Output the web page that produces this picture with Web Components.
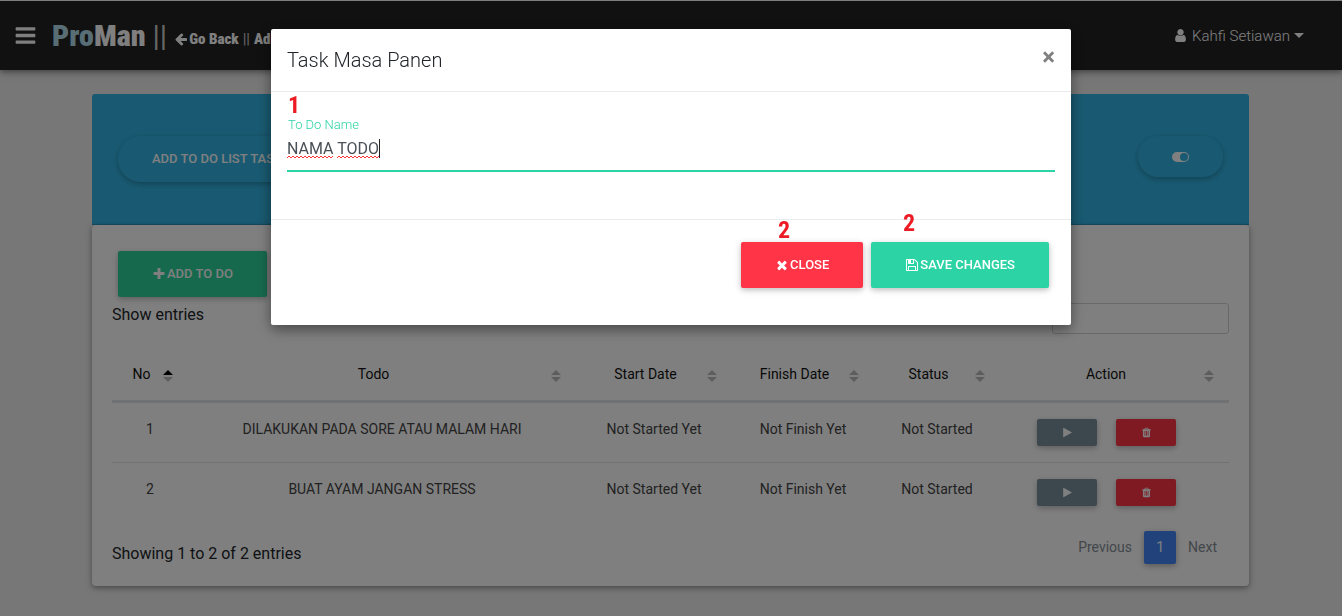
<!DOCTYPE html>
<html lang="id">
<head>
<meta charset="utf-8">
<meta name="viewport" content="width=device-width, initial-scale=1">
<title>ProMan</title>
<style>
  body { margin: 0; min-height: 100vh; background: #eee; color: #212529; font: 400 16px/24px Roboto, sans-serif; }
</style>
</head>
<body>
<pm-navbar user="Kahfi Setiawan"></pm-navbar>
<pm-board>
  <pm-todo-table></pm-todo-table>
</pm-board>
<pm-modal heading="Task Masa Panen">
  <pm-field label="To Do Name" value="NAMA TODO"></pm-field>
  <pm-button slot="actions" color="#ff3547" icon="times">CLOSE</pm-button>
  <pm-button slot="actions" color="#2bd3a5" icon="save">SAVE CHANGES</pm-button>
</pm-modal>

<script>
const ICONS = {
  times: 'M1490 1322q0 40-28 68l-136 136q-28 28-68 28t-68-28l-294-294-294 294q-28 28-68 28t-68-28l-136-136q-28-28-28-68t28-68l294-294-294-294q-28-28-28-68t28-68l136-136q28-28 68-28t68 28l294 294 294-294q28-28 68-28t68 28l136 136q28 28 28 68t-28 68l-294 294 294 294q28 28 28 68z',
  plus: 'M1600 736v192q0 40-28 68t-68 28h-416v416q0 40-28 68t-68 28h-192q-40 0-68-28t-28-68v-416h-416q-40 0-68-28t-28-68v-192q0-40 28-68t68-28h416v-416q0-40 28-68t68-28h192q40 0 68 28t28 68v416h416q40 0 68 28t28 68z',
  save: 'M512 1536h768v-384h-768v384zm896 0h128v-896q0-14-10-38.500t-20-34.500l-281-281q-10-10-34-20t-39-10v416q0 40-28 68t-68 28h-576q-40 0-68-28t-28-68v-416h-128v1280h128v-416q0-40 28-68t68-28h832q40 0 68 28t28 68v416zm-384-928v-320q0-13-9.500-22.500t-22.500-9.500h-192q-13 0-22.500 9.500t-9.500 22.500v320q0 13 9.500 22.500t22.500 9.500h192q13 0 22.500-9.500t9.500-22.500zm640 32v928q0 40-28 68t-68 28h-1344q-40 0-68-28t-28-68v-1344q0-40 28-68t68-28h928q40 0 88 20t76 48l280 280q28 28 48 76t20 88z',
  trash: 'M704 1376v-704q0-14-9-23t-23-9h-64q-14 0-23 9t-9 23v704q0 14 9 23t23 9h64q14 0 23-9t9-23zm256 0v-704q0-14-9-23t-23-9h-64q-14 0-23 9t-9 23v704q0 14 9 23t23 9h64q14 0 23-9t9-23zm256 0v-704q0-14-9-23t-23-9h-64q-14 0-23 9t-9 23v704q0 14 9 23t23 9h64q14 0 23-9t9-23zm-544-992h448l-48-117q-7-9-17-11h-317q-10 2-17 11zm928 32v64q0 14-9 23t-23 9h-96v948q0 83-47 143.500t-113 60.500h-832q-66 0-113-58.500t-47-141.500v-952h-96q-14 0-23-9t-9-23v-64q0-14 9-23t23-9h309l70-167q15-37 54-63t79-26h320q40 0 79 26t54 63l70 167h309q14 0 23 9t9 23z',
  play: 'M1576 927l-1328 738q-23 13-39.500 3t-16.500-36v-1472q0-26 16.500-36t39.500 3l1328 738q23 13 23 31t-23 31z',
  back: 'M1664 896v128q0 53-32.500 90.500t-84.500 37.500h-704l293 294q38 36 38 90t-38 90l-75 76q-37 37-90 37-52 0-91-37l-651-652q-37-37-37-90 0-52 37-91l651-650q38-38 91-38 52 0 90 38l75 74q38 38 38 91t-38 91l-293 293h704q52 0 84.500 37.500t32.500 90.500z',
  user: 'M1536 1399q0 109-62.500 187t-150.500 78h-854q-88 0-150.500-78t-62.500-187q0-85 8.500-160.500t31.500-152 58.500-131 94-89 134.500-34.500q131 128 313 128t313-128q76 0 134.500 34.500t94 89 58.500 131 31.500 152 8.500 160.500zm-256-887q0 159-112.500 271.500t-271.500 112.500-271.500-112.500-112.500-271.500 112.500-271.500 271.500-112.500 271.500 112.500 112.500 271.500z',
  bars: 'M1664 1344v128q0 26-19 45t-45 19h-1408q-26 0-45-19t-19-45v-128q0-26 19-45t45-19h1408q26 0 45 19t19 45zm0-512v128q0 26-19 45t-45 19h-1408q-26 0-45-19t-19-45v-128q0-26 19-45t45-19h1408q26 0 45 19t19 45zm0-512v128q0 26-19 45t-45 19h-1408q-26 0-45-19t-19-45v-128q0-26 19-45t45-19h1408q26 0 45 19t19 45z'
};
const icon = (name, size) =>
  `<svg width="${size}" height="${size}" viewBox="0 0 1792 1792" fill="currentColor" aria-hidden="true"><path d="${ICONS[name]}"/></svg>`;

class Base extends HTMLElement {
  connectedCallback() {
    if (this.shadowRoot) return;
    this.attachShadow({ mode: 'open' }).innerHTML =
      `<style>*,:host{box-sizing:border-box}svg{display:block;flex:none}button,input{font:inherit;margin:0}button{cursor:pointer}${this.css()}</style>${this.html()}`;
  }
}

customElements.define('pm-button', class extends Base {
  css() {
    const small = this.hasAttribute('small');
    return `
    :host { display: block; }
    button { display: flex; align-items: center; justify-content: center; gap: 1px; height: ${small ? 27 : 46}px;
      ${small ? 'width: 60px; padding: 0;' : 'padding: 0 34px;'} border: 0; border-radius: 2px; color: #fff;
      background: ${this.getAttribute('color')}; font-size: 13px; line-height: 20px; font-weight: 500; white-space: nowrap;
      box-shadow: 0 2px 5px rgba(0,0,0,.16), 0 2px 8px rgba(0,0,0,.12); }
    button.pill { border-radius: 160px; }`;
  }
  html() {
    const name = this.getAttribute('icon');
    const label = this.getAttribute('label');
    return `<button type="button" class="${this.hasAttribute('pill') ? 'pill' : ''}" ${label ? `aria-label="${label}"` : ''}>${name ? icon(name, this.hasAttribute('small') ? 11 : 14) : ''}<slot></slot></button>`;
  }
});

customElements.define('pm-navbar', class extends Base {
  css() { return `
    :host { display: flex; align-items: center; height: 70px; padding: 0 38px 0 14px; background: #222; color: #fff;
      border-top: 1px solid #fff; box-shadow: 0 2px 5px rgba(0,0,0,.3), 0 2px 10px rgba(0,0,0,.2); position: relative; }
    .menu { border: 0; background: none; color: inherit; padding: 0; }
    nav { display: flex; align-items: baseline; gap: 7px; margin-left: 15px; flex: 1; white-space: nowrap;
      font-family: Impact, "Roboto Condensed", "Liberation Sans Narrow", "Liberation Sans", sans-serif; font-weight: 900; }
    .brand, .sep { font-size: 30px; line-height: 40px; }
    .brand b { color: #b0dbe8; font-weight: inherit; }
    .sep, .bar { color: #ccc; font-weight: 400; }
    a { color: inherit; text-decoration: none; }
    .crumbs { display: flex; align-items: center; gap: 4px; font-size: 15px; line-height: 20px; }
    .crumbs a { display: flex; align-items: center; gap: 1px; }
    .user { display: flex; align-items: center; gap: 4px; font-size: 15px; font-weight: 300; }
    .caret { border: 5px solid transparent; border-top-color: currentColor; border-bottom: 0; }`; }
  html() { return `
    <button class="menu" type="button" aria-label="Menu">${icon('bars', 23)}</button>
    <nav>
      <a class="brand" href="#"><b>Pro</b>Man</a><span class="sep">||</span>
      <span class="crumbs"><a href="#">${icon('back', 14)}Go Back</a><span class="bar">||</span><a href="#">Admin</a></span>
    </nav>
    <a class="user" href="#">${icon('user', 15)}${this.getAttribute('user')}<span class="caret"></span></a>`; }
});

customElements.define('pm-board', class extends Base {
  css() { return `
    :host { display: block; padding: 24px 93px 30px 92px; }
    header { display: flex; justify-content: space-between; align-items: flex-start; height: 131px; padding: 42px 26px;
      background: #33b5e5; border-radius: 3px 3px 0 0; border-bottom: 1px solid #2b9ac4; }
    .switch { display: flex; align-items: center; justify-content: center; width: 85px; height: 41px; border: 0; border-radius: 160px;
      background: #33b5e5; color: #fff; box-shadow: 0 2px 5px rgba(0,0,0,.16), 0 2px 10px rgba(0,0,0,.12); }
    section { padding: 26px 20px 9px; background: #fff; border-radius: 4px; box-shadow: 0 2px 5px rgba(0,0,0,.3), 0 2px 10px rgba(0,0,0,.12); }
    .tools { display: flex; padding-left: 6px; }`; }
  html() { return `
    <header>
      <pm-button pill color="#33b5e5">ADD TO DO LIST TASK</pm-button>
      <button class="switch" type="button" aria-label="Toggle"><svg width="17" height="10" viewBox="0 0 17 10"><path fill="currentColor" fill-rule="evenodd" d="M5 0h7a5 5 0 0 1 0 10H5A5 5 0 0 1 5 0zm7 1a4 4 0 1 0 0 8a4 4 0 0 0 0-8z"/></svg></button>
    </header>
    <section>
      <div class="tools"><pm-button color="#2ed39c" icon="plus">ADD TO DO</pm-button></div>
      <slot></slot>
    </section>`; }
});

customElements.define('pm-todo-table', class extends Base {
  css() { return `
    :host { display: block; }
    .top { display: flex; justify-content: space-between; align-items: flex-start; padding-top: 6px; height: 50px; color: #212529; }
    .top input { width: 177px; height: 31px; border: 1px solid #ced4da; border-radius: 3px; background: #fff; padding: 4px 8px; }
    table { width: 100%; table-layout: fixed; border-collapse: collapse; font-size: 14px; line-height: 20px; text-align: center; }
    th { position: relative; height: 54px; padding: 2px 30px 0 13px; font-weight: 400; color: #111; border-bottom: 3px solid #dee2e6; white-space: nowrap; }
    th svg { position: absolute; right: 15px; top: 23px; }
    td { height: 61px; padding: 16px 0 0; vertical-align: top; color: #444; white-space: nowrap; }
    tbody tr + tr td { border-top: 1px solid #dee2e6; }
    .c1 { width: 76px; } .c3 { width: 156px; } .c4 { width: 142px; } .c5 { width: 126px; } .c6 { width: 229px; }
    .acts { display: flex; justify-content: center; gap: 19px; padding-right: 16px; }
    .foot { display: flex; justify-content: space-between; align-items: flex-start; padding-top: 8px; }
    .info { line-height: 46px; }
    .pages { display: flex; font-size: 14px; line-height: 33px; }
    .pages a { padding: 0 12px; color: #868e96; text-decoration: none; }
    .pages .on { width: 32px; padding: 0; text-align: center; color: #fff; background: #4285f4; border-radius: 2px; box-shadow: 0 2px 5px rgba(0,0,0,.2), 0 2px 10px rgba(0,0,0,.12); }`; }
  html() {
    const heads = ['No', 'Todo', 'Start Date', 'Finish Date', 'Status', 'Action'];
    const rows = [['1', 'DILAKUKAN PADA SORE ATAU MALAM HARI'], ['2', 'BUAT AYAM JANGAN STRESS']];
    return `
    <div class="top"><span>Show entries</span><input type="search" aria-label="Search"></div>
    <table>
      <thead><tr>${heads.map((h, i) => `<th scope="col" class="c${i + 1}">${h}<svg width="10" height="12" viewBox="0 0 10 12"><path d="M0 5L5 0l5 5z" fill="${i ? '#bbb' : '#000'}"/><path d="M0 7h10l-5 5z" fill="#bbb"/></svg></th>`).join('')}</tr></thead>
      <tbody>${rows.map(r => `<tr><td>${r[0]}</td><td>${r[1]}</td><td>Not Started Yet</td><td>Not Finish Yet</td><td>Not Started</td>
        <td><div class="acts"><pm-button small color="#78909c" icon="play" label="Start"></pm-button><pm-button small color="#ff3547" icon="trash" label="Delete"></pm-button></div></td></tr>`).join('')}</tbody>
    </table>
    <div class="foot"><span class="info">Showing 1 to 2 of 2 entries</span>
      <nav class="pages" aria-label="Pages"><a href="#">Previous</a><a class="on" href="#">1</a><a href="#">Next</a></nav></div>`;
  }
});

customElements.define('pm-field', class extends Base {
  css() { return `
    :host { display: block; position: relative; }
    label { display: block; font-size: 13px; line-height: 20px; font-weight: 300; color: #2bd3a5; padding-left: 1px; }
    input { display: block; width: 100%; height: 37px; padding: 0 0 8px; border: 0; border-bottom: 2px solid #2bd3a5; outline: 0; background: none; color: #495057; border-radius: 0; }
    .spell { position: absolute; left: 0; top: 24px; height: 19px; display: flex; align-items: flex-end; gap: 4px; pointer-events: none; }
    .spell svg { width: 46px; height: 3px; }
    .spell svg + svg { width: 42px; }
    .spell i { width: 1px; height: 19px; margin-left: -4px; background: #222; }`; }
  html() {
    const wave = id => `<svg><defs><pattern id="${id}" width="4" height="3" patternUnits="userSpaceOnUse"><path d="M0 3L2 1L4 3" fill="none" stroke="#f33"/></pattern></defs><rect width="100%" height="3" fill="url(#${id})"/></svg>`;
    return `<label for="f">${this.getAttribute('label')}</label><input id="f" type="text" value="${this.getAttribute('value')}" spellcheck="false">
    <div class="spell" aria-hidden="true">${wave('a')}${wave('b')}<i></i></div>`;
  }
});

customElements.define('pm-modal', class extends Base {
  css() { return `
    :host { position: fixed; inset: 0; padding: 29px 16px; background: rgba(0,0,0,.5); z-index: 10; }
    .dialog { position: relative; max-width: 800px; margin: 0 auto; background: #fff; border-radius: 2px; box-shadow: 0 5px 11px rgba(0,0,0,.18), 0 4px 15px rgba(0,0,0,.3); }
    header { display: flex; justify-content: space-between; align-items: flex-start; padding: 16px; border-bottom: 1px solid #e9ecef; }
    h4 { margin: 0; font-size: 20px; line-height: 30px; font-weight: 300; color: #212529; }
    .x { border: 0; background: none; padding: 0; font-size: 24px; line-height: 24px; font-weight: 700; color: #808080; }
    .body { height: 128px; padding: 23px 16px 0; border-bottom: 1px solid #e9ecef; }
    footer { display: flex; justify-content: flex-end; gap: 8px; padding: 22px 22px 37px; }
    .mark { position: absolute; font: 700 24px/24px "Roboto Condensed", "Liberation Sans Narrow", "Liberation Sans", sans-serif; color: #ed1c24; }
    .m1 { left: 17px; top: 64px; } .m2 { left: 507px; top: 189px; } .m3 { left: 632px; top: 182px; }`; }
  html() { return `
    <div class="dialog" role="dialog" aria-labelledby="t">
      <header><h4 id="t">${this.getAttribute('heading')}</h4><button class="x" type="button" aria-label="Close">×</button></header>
      <div class="body"><slot></slot></div>
      <footer><slot name="actions"></slot></footer>
      <span class="mark m1">1</span><span class="mark m2">2</span><span class="mark m3">2</span>
    </div>`; }
});
</script>
</body>
</html>
